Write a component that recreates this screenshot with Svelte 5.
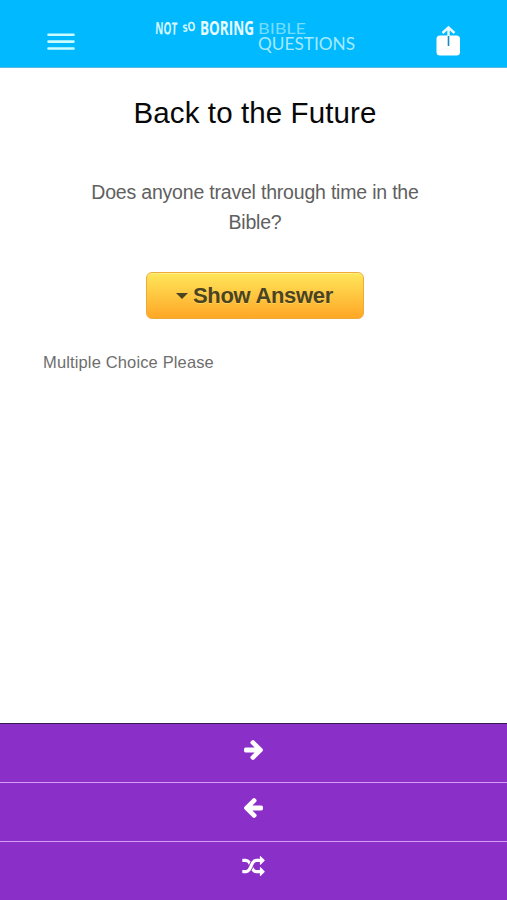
<script>
  let title = 'Back to the Future';
  let question = 'Does anyone travel through time in the Bible?';

  const arrow =
    'M1472 960q0 54-37 91l-651 651q-39 37-91 37-51 0-90-37l-75-75q-38-38-38-91t38-91l293-293H117q-52 0-84.500-37.500T0 1024V896q0-53 32.500-90.500T117 768h704L528 474q-38-36-38-90t38-90l75-75q38-38 90-38 53 0 91 38l651 651q37 35 37 90z';

  const actions = [
    { label: 'Next question', viewBox: '0 181 1472 1558', width: 19, path: arrow },
    { label: 'Previous question', viewBox: '0 181 1472 1558', width: 19, flip: true, path: arrow },
    {
      label: 'Random question',
      viewBox: '0 32 1792 1600',
      width: 23,
      path: 'M666 481q-60 92-137 273-22-45-37-72.500t-40.500-63.500-51-56.500-63-35-81.500-14.500H32q-14 0-23-9t-9-23V288q0-14 9-23t23-9h224q250 0 410 225zm1126 799q0 14-9 23l-320 320q-9 9-23 9-13 0-22.500-9.500t-9.500-22.500v-192q-32 0-85 .5t-81 1-73-1-71-5-64-10.500-63-18.500-58-28.500-59-40-55-53.500-56-69.500q59-93 136-273 22 45 37 72.500t40.500 63.500 51 56.500 63 35 81.500 14.500h256V960q0-14 9-23t23-9q12 0 24 10l319 319q9 9 9 23zm0-896q0 14-9 23l-320 320q-9 9-23 9-13 0-22.500-9.500t-9.500-22.500V512h-256q-48 0-87 15t-69 45-51 61.500-45 77.500q-32 62-78 171-29 66-49.500 111t-54 105-64 100-74 83-90 68.500-106.500 42-128 16.500H32q-14 0-23-9t-9-23v-192q0-14 9-23t23-9h224q48 0 87-15t69-45 51-61.500 45-77.500q32-62 78-171 29-66 49.500-111t54-105 64-100 74-83 90-68.500 106.500-42 128-16.500h256V64q0-14 9-23t23-9q12 0 24 10l319 319q9 9 9 23z'
    }
  ];
</script>

<div class="app">
  <header>
    <button class="icon-button" aria-label="Menu">
      <svg width="28" height="18" viewBox="0 0 28 18">
        <path d="M1.500 1.700h25M1.500 8.600h25M1.500 15.500h25" />
      </svg>
    </button>

    <svg class="logo" width="204" height="44" viewBox="0 -4 204 44">
      <g class="hand">
        <text x="3" y="17" font-size="17" textLength="22" lengthAdjust="spacingAndGlyphs" transform="rotate(2 3 17)">NOT</text>
        <text x="31" y="15" font-size="13" textLength="13" lengthAdjust="spacingAndGlyphs" transform="rotate(-7 31 15)">sO</text>
        <text class="big" x="48" y="17.500" font-size="20" textLength="54" lengthAdjust="spacingAndGlyphs">BORING</text>
      </g>
      <g class="thin">
        <text class="faint" x="106" y="17" font-size="16" textLength="48" lengthAdjust="spacingAndGlyphs">BIBLE</text>
        <text x="106" y="33" font-size="17" textLength="97" lengthAdjust="spacingAndGlyphs">QUESTIONS</text>
      </g>
    </svg>

    <button class="icon-button" aria-label="Share">
      <svg width="26" height="32" viewBox="0 0 26 32">
        <rect x="1.500" y="10.500" width="23.500" height="20" rx="3.500" fill="#fff" />
        <path class="cut" d="M13.500 11v10" />
        <path class="share-arrow" d="M13.500 11V3M7.500 8L13.500 2.500 19.500 8" />
      </svg>
    </button>
  </header>

  <main>
    <h1>{title}</h1>
    <p class="question">{question}</p>
    <button class="answer">
      <svg width="12" height="6" viewBox="0 0 12 6"><path d="M0 0h12L6 6z" /></svg>
      <span>Show Answer</span>
    </button>
    <p class="choice">Multiple Choice Please</p>
  </main>

  <nav>
    {#each actions as action}
      <button aria-label={action.label}>
        <svg class:flip={action.flip} width={action.width} height="20" viewBox={action.viewBox}>
          <path d={action.path} />
        </svg>
      </button>
    {/each}
  </nav>
</div>

<style>
  :global(body) {
    margin: 0;
    background: #fff;
  }

  .app {
    display: flex;
    flex-direction: column;
    height: 900px;
    font-family: "Liberation Sans", Helvetica, Arial, sans-serif;
  }

  button {
    border: none;
    padding: 0;
    font-family: inherit;
    cursor: pointer;
  }

  header {
    display: flex;
    justify-content: space-between;
    box-sizing: border-box;
    height: 68px;
    padding: 0 46px 0 47px;
    background: #00b9ff;
    border-bottom: 1px solid #55b9e4;
  }

  .icon-button {
    display: flex;
    align-items: flex-start;
    padding-top: 25px;
    background: none;
  }

  .icon-button:first-child {
    padding-top: 33px;
  }

  .icon-button:first-child path {
    stroke: #c9fbff;
    stroke-width: 2.6;
    stroke-linecap: round;
  }

  .cut {
    stroke: #168abf;
    stroke-width: 1.6;
  }

  .share-arrow {
    fill: none;
    stroke: #e9fbff;
    stroke-width: 2.4;
  }

  .logo {
    margin: 13px 0 0 -3px;
    overflow: visible;
  }

  .hand text {
    font-family: "Open Sans", sans-serif;
    font-weight: 700;
    fill: #d3f6ff;
  }

  .hand .big {
    fill: #e6faff;
  }

  .thin text {
    font-family: Lato, sans-serif;
    font-weight: 400;
    fill: #a5eaff;
  }

  .thin .faint {
    fill: #74dcff;
  }

  main {
    flex: 1;
    display: flex;
    flex-direction: column;
    align-items: center;
    padding: 0 43px;
  }

  h1 {
    margin: 27px 0 0 3px;
    font-size: 29.500px;
    line-height: 36px;
    font-weight: 400;
    letter-spacing: 0.1px;
    color: #080808;
  }

  .question {
    width: 340px;
    margin: 46px 0 0 3px;
    font-size: 19.500px;
    line-height: 30px;
    letter-spacing: -0.2px;
    text-align: center;
    color: #606060;
  }

  .answer {
    display: flex;
    align-items: center;
    justify-content: center;
    gap: 5px;
    box-sizing: border-box;
    width: 218px;
    height: 47px;
    margin: 35px 0 0 2px;
    border: 1px solid #eeab38;
    border-radius: 6px;
    background: linear-gradient(#ffe65a, #ffa726);
    box-shadow: inset 0 1px 0 #fff08a;
    color: #4b4423;
    font-size: 22px;
    font-weight: 700;
    letter-spacing: -0.3px;
    text-shadow: 0 1px 0 rgba(255, 230, 120, 0.5);
  }

  .answer path {
    fill: #4b4423;
  }

  .choice {
    align-self: flex-start;
    margin: 33px 0 0;
    font-size: 16.500px;
    line-height: 20px;
    letter-spacing: 0.14px;
    color: #6e6e6e;
  }

  nav {
    display: flex;
    flex-direction: column;
    border-top: 1px solid #35194f;
  }

  nav button {
    display: flex;
    justify-content: center;
    box-sizing: border-box;
    height: 58px;
    padding-top: 16px;
    background: #8b2fc9;
  }

  nav button + button {
    height: 59px;
    padding-top: 15px;
    border-top: 1px solid #d59bf5;
  }

  nav button:last-child {
    padding-top: 14px;
  }

  nav path {
    fill: #fff;
  }

  .flip {
    transform: scaleX(-1);
  }
</style>
